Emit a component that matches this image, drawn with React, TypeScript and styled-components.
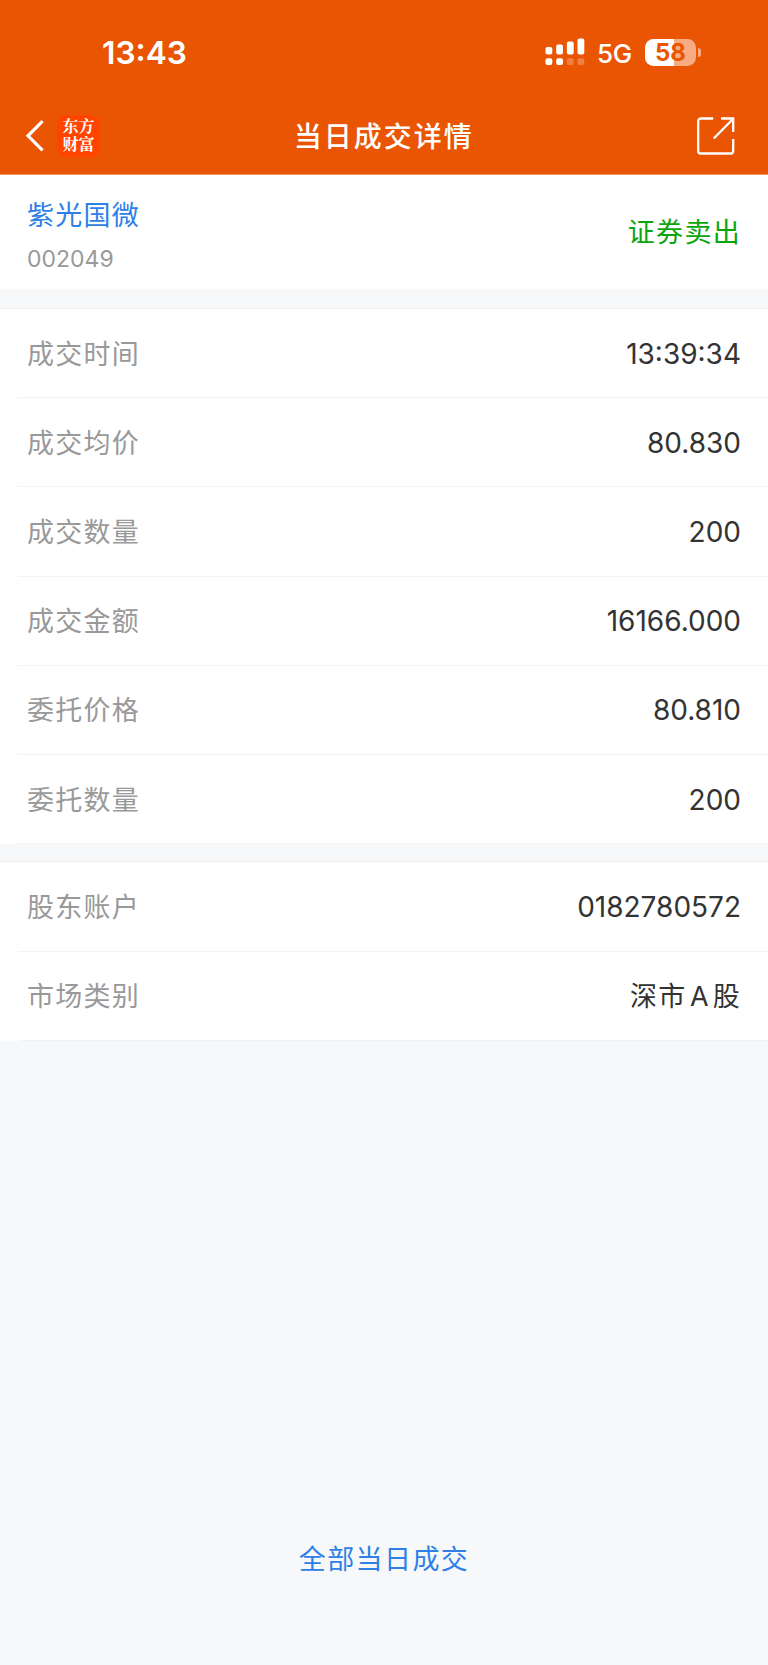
import React from "react";
import styled, { createGlobalStyle } from "styled-components";

const GlobalStyle = createGlobalStyle`
  * { box-sizing: border-box; }
  body {
    margin: 0;
    background: #f7f8fa;
    font-family: Inter, "Noto Sans CJK SC", sans-serif;
  }
`;

const Screen = styled.div`
  width: 768px;
  height: 1665px;
  display: flex;
  flex-direction: column;
  background: #f7f8fa;
  overflow: hidden;
`;

const Header = styled.header`
  height: 175px;
  flex: none;
  background: #ea5503;
  border-bottom: 1px solid #f29361;
  color: #fff;
`;

const StatusBar = styled.div`
  height: 104px;
  padding: 0 67px 0 102px;
  display: flex;
  justify-content: space-between;
  align-items: center;
`;

const Clock = styled.span`
  padding-top: 2px;
  font-size: 31.7px;
  font-weight: 600;
  line-height: 40px;
`;

const StatusIcons = styled.div`
  display: flex;
  align-items: center;
`;

const Network = styled.span`
  margin: 3px 0 0 12px;
  width: 48px;
  font-size: 26px;
  font-weight: 500;
  line-height: 30px;
  letter-spacing: -0.4px;
`;

const Battery = styled.div`
  display: flex;
  align-items: center;
  gap: 2px;
`;

const BatteryBody = styled.div`
  width: 51px;
  height: 27px;
  border-radius: 8.5px;
  display: flex;
  justify-content: center;
  align-items: center;
  background: linear-gradient(90deg, #fff 57%, #f6ab83 57%);
  color: #ea5503;
  font-size: 24px;
  font-weight: 700;
  line-height: 27px;
`;

const BatteryCap = styled.div`
  width: 3px;
  height: 9px;
  border-radius: 0 4px 4px 0;
  background: #f6ab83;
`;

const NavBar = styled.nav`
  height: 64px;
  padding: 0 33.5px 0 25px;
  display: grid;
  grid-template-columns: 1fr auto 1fr;
  align-items: center;
`;

const NavStart = styled.div`
  display: flex;
  align-items: center;
  gap: 11px;
  padding-bottom: 1px;
`;

const BrandMark = styled.div`
  width: 43px;
  height: 42px;
  border-radius: 9px;
  background: #ff4400;
  display: flex;
  flex-direction: column;
  align-items: center;
  justify-content: center;
  padding-bottom: 2px;
  font-family: "Noto Serif CJK SC", "Noto Sans CJK SC", serif;
  font-size: 16px;
  font-weight: 700;
  line-height: 17.5px;
`;

const Title = styled.h1`
  margin: 0;
  padding-top: 1px;
  font-size: 28px;
  font-weight: 500;
  line-height: 40px;
  letter-spacing: 2px;
  text-indent: 8px;
`;

const NavEnd = styled.div`
  display: flex;
  justify-content: flex-end;
`;

const Summary = styled.section`
  height: 116px;
  flex: none;
  padding: 0 27px;
  display: flex;
  justify-content: space-between;
  align-items: center;
  background: #fff;
  border-bottom: 1px solid #f1f2f4;
`;

const Stock = styled.div`
  padding-top: 4px;
`;

const StockName = styled.div`
  color: #2e80e8;
  font-size: 27px;
  line-height: 40px;
  letter-spacing: 1.25px;
`;

const StockCode = styled.div`
  margin-top: 8px;
  color: #999;
  font-size: 23px;
  line-height: 30px;
`;

const Side = styled.div`
  color: #0aa50a;
  font-size: 27px;
  line-height: 40px;
  letter-spacing: 1.3px;
`;

const Group = styled.section`
  flex: none;
  margin-top: 17px;
  border-top: 1px solid #eeeff1;
  background: #fff;
`;

const Row = styled.div`
  height: 89.22px;
  margin-left: 18px;
  padding: 0 27px 0 9px;
  display: flex;
  justify-content: space-between;
  align-items: center;
  border-bottom: 1px solid #f2f3f4;
`;

const Label = styled.span`
  padding-top: 3px;
  color: #999;
  font-size: 27px;
  line-height: 40px;
  letter-spacing: 1.25px;
`;

const Value = styled.span<{ $cjk?: boolean }>`
  padding-top: ${(p) => (p.$cjk ? 3 : 1)}px;
  color: #333;
  font-size: ${(p) => (p.$cjk ? 27 : 28)}px;
  line-height: 40px;
  letter-spacing: ${(p) => (p.$cjk ? "1.2px" : "0")};
`;

const Latin = styled.span`
  margin: 0 3px 0 3.5px;
`;

const Footer = styled.footer`
  flex: 1;
  padding-bottom: 85px;
  display: flex;
  justify-content: center;
  align-items: flex-end;
`;

const FooterLink = styled.a`
  color: #2e80e8;
  font-size: 27px;
  line-height: 40px;
  letter-spacing: 1.4px;
`;

const SignalIcon = () => (
  <svg width="40" height="28" viewBox="0 0 40 28" fill="#fff">
    <rect x="0.5" y="9" width="6.8" height="7.5" rx="2" />
    <rect x="11.2" y="6.5" width="6.8" height="10" rx="2" />
    <rect x="21.9" y="3.5" width="6.8" height="13" rx="2" />
    <rect x="32.5" y="0.5" width="6.8" height="16" rx="2" />
    <rect x="0.5" y="20.3" width="6.8" height="6.8" rx="2" />
    <rect x="11.2" y="20.3" width="6.8" height="6.8" rx="2" />
    <rect x="21.9" y="20.3" width="6.8" height="6.8" rx="2" opacity="0.25" />
    <rect x="32.5" y="20.3" width="6.8" height="6.8" rx="2" opacity="0.25" />
  </svg>
);

const BackIcon = () => (
  <svg width="21" height="32" viewBox="0 0 21 32" fill="none" stroke="#fff" strokeWidth="3.2">
    <path d="M17.6 1.2 3 15.8 17.6 30.4" />
  </svg>
);

const ShareIcon = () => (
  <svg width="40" height="40" viewBox="0 0 40 40" fill="none" stroke="#fff" strokeWidth="2.3">
    <path d="M18.2 2.5H5.7a2.5 2.5 0 0 0-2.5 2.5v30a2.5 2.5 0 0 0 2.5 2.5h30a2.5 2.5 0 0 0 2.5-2.5V23" />
    <path d="M26 2.5H38.2V16" />
    <path d="M18.7 22.5 38 3" />
  </svg>
);

type Item = { label: string; value: React.ReactNode; cjk?: boolean };

const tradeItems: Item[] = [
  { label: "成交时间", value: "13:39:34" },
  { label: "成交均价", value: "80.830" },
  { label: "成交数量", value: "200" },
  { label: "成交金额", value: "16166.000" },
  { label: "委托价格", value: "80.810" },
  { label: "委托数量", value: "200" },
];

const accountItems: Item[] = [
  { label: "股东账户", value: "0182780572" },
  { label: "市场类别", value: <>深市<Latin>A</Latin>股</>, cjk: true },
];

const DetailGroup = ({ items }: { items: Item[] }) => (
  <Group>
    {items.map((item) => (
      <Row key={item.label}>
        <Label>{item.label}</Label>
        <Value $cjk={item.cjk}>{item.value}</Value>
      </Row>
    ))}
  </Group>
);

export default function App() {
  return (
    <Screen>
      <GlobalStyle />
      <Header>
        <StatusBar>
          <Clock>13:43</Clock>
          <StatusIcons>
            <SignalIcon />
            <Network>5G</Network>
            <Battery>
              <BatteryBody>58</BatteryBody>
              <BatteryCap />
            </Battery>
          </StatusIcons>
        </StatusBar>
        <NavBar>
          <NavStart>
            <BackIcon />
            <BrandMark>
              <span>东方</span>
              <span>财富</span>
            </BrandMark>
          </NavStart>
          <Title>当日成交详情</Title>
          <NavEnd>
            <ShareIcon />
          </NavEnd>
        </NavBar>
      </Header>
      <Summary>
        <Stock>
          <StockName>紫光国微</StockName>
          <StockCode>002049</StockCode>
        </Stock>
        <Side>证券卖出</Side>
      </Summary>
      <DetailGroup items={tradeItems} />
      <DetailGroup items={accountItems} />
      <Footer>
        <FooterLink>全部当日成交</FooterLink>
      </Footer>
    </Screen>
  );
}
